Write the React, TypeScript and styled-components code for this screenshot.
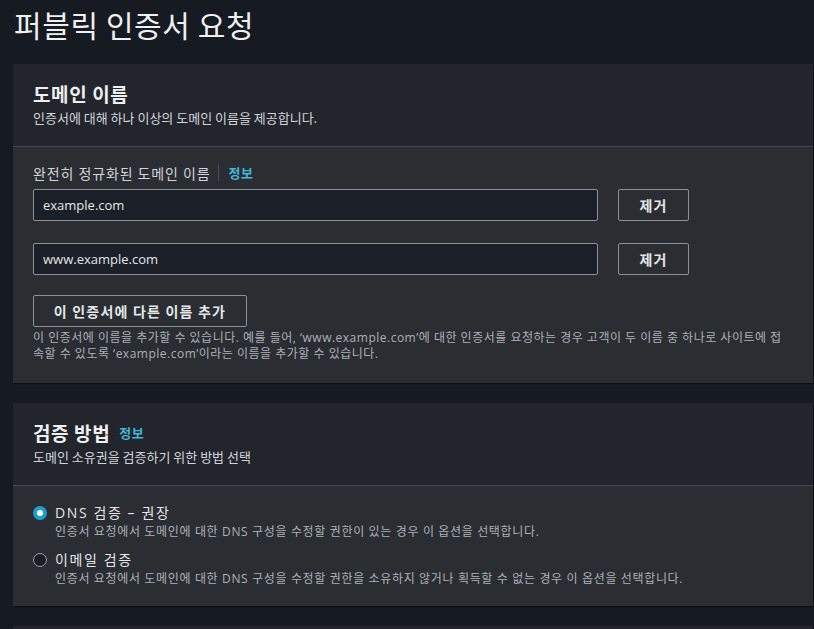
import React from "react";
import styled, { createGlobalStyle } from "styled-components";

const GlobalStyle = createGlobalStyle`
    html, body {
        margin: 0;
        padding: 0;
        background: #161a21;
    }
    body {
        font-family: "Open Sans", "Noto Sans CJK KR", sans-serif;
        color: #d1d5db;
        overflow: hidden;
    }
`;

const Page = styled.div`
    width: 814px;
    height: 629px;
    padding: 4px 0 0 13px;
    box-sizing: border-box;
    display: flex;
    flex-direction: column;
    gap: 20px;
`;

const PageTitle = styled.h1`
    margin: 0 0 0 1px;
    font-family: "Noto Sans CJK KR", sans-serif;
    font-weight: 400;
    font-size: 30px;
    line-height: 40px;
    letter-spacing: 0.6px;
    color: #eef0f2;
`;

const Card = styled.section`
    width: 800px;
    background: #2a2d32;
    box-shadow: 1px 1px 1px #0c0e12;
    flex-shrink: 0;
`;

const CardHeader = styled.header`
    background: #22252b;
    padding: 20px 20px 20px;
    border-bottom: 1px solid #434952;
`;

const CardTitle = styled.h2`
    margin: 0;
    height: 20px;
    display: flex;
    align-items: center;
    gap: 9px;
    font-family: "Noto Sans CJK KR", sans-serif;
    font-size: 19px;
    font-weight: 700;
    line-height: 20px;
    letter-spacing: 0.6px;
    color: #eef0f2;
`;

const InfoLink = styled.a`
    font-family: "Noto Sans CJK KR", sans-serif;
    font-size: 13px;
    font-weight: 700;
    line-height: 20px;
    letter-spacing: 0.5px;
    color: #44b7d6;
    text-decoration: none;
`;

const CardSub = styled.p`
    margin: 6px 0 0;
    font-family: "Noto Sans CJK KR", sans-serif;
    font-size: 13px;
    line-height: 16px;
    color: #d1d5db;
`;

const CardBody = styled.div<{ $pt: number; $pb: number }>`
    padding: ${(p) => p.$pt}px 20px ${(p) => p.$pb}px;
`;

const FieldLabel = styled.div`
    display: flex;
    align-items: center;
    font-family: "Noto Sans CJK KR", sans-serif;
    font-size: 14px;
    line-height: 20px;
    letter-spacing: 0.9px;
    color: #d1d5db;
`;

const LabelDivider = styled.span`
    width: 1px;
    height: 16px;
    background: #4a5059;
    margin: 0 9px 0 8px;
`;

const Rows = styled.div`
    margin-top: 6px;
    display: flex;
    flex-direction: column;
    gap: 22px;
`;

const Row = styled.div`
    display: flex;
    gap: 20px;
`;

const TextInput = styled.input`
    width: 565px;
    height: 32px;
    box-sizing: border-box;
    padding: 0 9px;
    background: #1b1f28;
    border: 1px solid #8b9197;
    border-radius: 2px;
    font-family: "Open Sans", "Noto Sans CJK KR", sans-serif;
    font-size: 13px;
    color: #e4e6e9;
    outline: none;
`;

const Button = styled.button<{ $w: number }>`
    width: ${(p) => p.$w}px;
    height: 32px;
    box-sizing: border-box;
    background: transparent;
    border: 1px solid #8b9197;
    border-radius: 2px;
    font-family: "Noto Sans CJK KR", sans-serif;
    font-size: 14px;
    font-weight: 700;
    letter-spacing: 1.2px;
    color: #e4e6e9;
    padding: 0;
`;

const AddWrap = styled.div`
    margin-top: 20px;
`;

const Help = styled.p`
    margin: 3px 0 0;
    font-family: "Open Sans", "Noto Sans CJK KR", sans-serif;
    font-size: 12px;
    line-height: 16px;
    color: #abb1b9;
    letter-spacing: 0.5px;
`;

const RadioList = styled.div`
    display: flex;
    flex-direction: column;
    gap: 10px;
`;

const RadioItem = styled.label`
    display: grid;
    grid-template-columns: 14px 1fr;
    column-gap: 8px;
    align-items: center;
`;

const RadioDot = styled.span<{ $checked?: boolean }>`
    width: 14px;
    height: 14px;
    box-sizing: border-box;
    border-radius: 50%;
    background: ${(p) => (p.$checked ? "#ffffff" : "#1b1f28")};
    border: ${(p) => (p.$checked ? "4px solid #1a9fd0" : "1.5px solid #9aa0a7")};
`;

const RadioLabel = styled.span`
    font-family: "Open Sans", "Noto Sans CJK KR", sans-serif;
    font-size: 14px;
    line-height: 20px;
    letter-spacing: 1.6px;
    color: #e4e6e9;
`;

const RadioDesc = styled.span`
    grid-column: 2;
    font-family: "Open Sans", "Noto Sans CJK KR", sans-serif;
    font-size: 12px;
    line-height: 17px;
    color: #abb1b9;
    letter-spacing: 0.65px;
`;

const domains = ["example.com", "www.example.com"];

const options = [
    {
        id: "dns",
        label: "DNS 검증 – 권장",
        desc: "인증서 요청에서 도메인에 대한 DNS 구성을 수정할 권한이 있는 경우 이 옵션을 선택합니다.",
        checked: true,
    },
    {
        id: "email",
        label: "이메일 검증",
        desc: "인증서 요청에서 도메인에 대한 DNS 구성을 수정할 권한을 소유하지 않거나 획득할 수 없는 경우 이 옵션을 선택합니다.",
        checked: false,
    },
];

const App = () => {
    return (
        <>
            <GlobalStyle />
            <Page>
                <PageTitle>퍼블릭 인증서 요청</PageTitle>

                <Card>
                    <CardHeader>
                        <CardTitle>도메인 이름</CardTitle>
                        <CardSub>인증서에 대해 하나 이상의 도메인 이름을 제공합니다.</CardSub>
                    </CardHeader>
                    <CardBody $pt={16} $pb={21}>
                        <FieldLabel>
                            완전히 정규화된 도메인 이름
                            <LabelDivider />
                            <InfoLink href="#">정보</InfoLink>
                        </FieldLabel>
                        <Rows>
                            {domains.map((d) => (
                                <Row key={d}>
                                    <TextInput defaultValue={d} />
                                    <Button $w={71}>제거</Button>
                                </Row>
                            ))}
                        </Rows>
                        <AddWrap>
                            <Button $w={214}>이 인증서에 다른 이름 추가</Button>
                        </AddWrap>
                        <Help>
                            이 인증서에 이름을 추가할 수 있습니다. 예를 들어, ‘www.example.com’에 대한 인증서를 요청하는 경우 고객이 두 이름 중 하나로 사이트에 접속할 수 있도록 ‘example.com’이라는 이름을 추가할 수 있습니다.
                        </Help>
                    </CardBody>
                </Card>

                <Card>
                    <CardHeader>
                        <CardTitle>
                            검증 방법
                            <InfoLink href="#">정보</InfoLink>
                        </CardTitle>
                        <CardSub>도메인 소유권을 검증하기 위한 방법 선택</CardSub>
                    </CardHeader>
                    <CardBody $pt={17} $pb={19}>
                        <RadioList>
                            {options.map((o) => (
                                <RadioItem key={o.id}>
                                    <RadioDot $checked={o.checked} />
                                    <RadioLabel>{o.label}</RadioLabel>
                                    <RadioDesc>{o.desc}</RadioDesc>
                                </RadioItem>
                            ))}
                        </RadioList>
                    </CardBody>
                </Card>

                <Card>
                    <CardHeader />
                </Card>
            </Page>
        </>
    );
};

export default App;
